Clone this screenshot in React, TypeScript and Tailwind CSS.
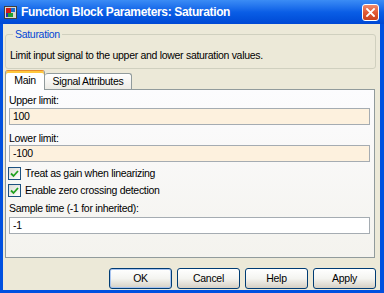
import { useState } from "react";

const font = { fontFamily: '"Liberation Sans", Arial, sans-serif' };

function TitleIcon() {
  return (
    <svg width="13" height="13" viewBox="0 0 13 13">
      <rect x="0.5" y="0.5" width="12" height="12" fill="#d8d8d0" stroke="#404040" />
      <rect x="2" y="2" width="5" height="5" fill="#d01818" />
      <rect x="7" y="2" width="4" height="4" fill="#1a6ad0" />
      <rect x="4" y="7" width="5" height="4" fill="#20a030" />
      <rect x="2" y="7" width="2" height="4" fill="#2030b0" />
    </svg>
  );
}

function CloseButton() {
  return (
    <div className="flex h-[17px] w-[17px] items-center justify-center rounded-[3px] border border-white bg-gradient-to-b from-[#f08a6c] via-[#e25a35] to-[#c8401c]">
      <svg width="9" height="9" viewBox="0 0 9 9">
        <path d="M1 1 L8 8 M8 1 L1 8" stroke="#fff" strokeWidth="1.8" strokeLinecap="square" />
      </svg>
    </div>
  );
}

function Checkbox({ checked, label }: { checked: boolean; label: string }) {
  return (
    <div className="-ml-px flex h-[13px] items-center gap-[4px]">
      <div className="flex h-[13px] w-[13px] items-center justify-center border border-[#1c5180] bg-gradient-to-br from-[#dcdcd6] to-[#ffffff]">
        {checked && (
          <svg width="9" height="9" viewBox="0 0 9 9">
            <path d="M1 4.5 L3.5 7 L8 2" fill="none" stroke="#21a121" strokeWidth="1.8" />
          </svg>
        )}
      </div>
      <span className="text-[10.5px] leading-[13px] tracking-[-0.3px] text-black">{label}</span>
    </div>
  );
}

function Field({ value, tint }: { value: string; tint: boolean }) {
  return (
    <div
      className={
        "flex h-[17px] items-center border border-[#a5acb2] px-[3px] text-[10.5px] tracking-[-0.3px] text-black " +
        (tint ? "bg-[#fdf1de]" : "bg-white")
      }
    >
      {value}
    </div>
  );
}

function Button({ label, isDefault }: { label: string; isDefault?: boolean }) {
  return (
    <div
      className={
        "flex h-[21px] w-[63px] items-center justify-center rounded-[3px] border border-[#003c74] bg-gradient-to-b from-[#ffffff] via-[#f4f4f0] to-[#d6d0c5] text-[10.5px] tracking-[-0.3px] text-black " +
        (isDefault ? "shadow-[inset_0_0_0_1px_#a8c4f0]" : "")
      }
    >
      {label}
    </div>
  );
}

export default function App() {
  const [tab] = useState("Main");
  const text = "text-[10.5px] leading-[13px] tracking-[-0.3px] text-black";

  return (
    <div style={font} className="flex h-[293px] w-[384px] flex-col bg-[#0050e0]">
      <div className="flex h-[24px] items-center bg-gradient-to-b from-[#3b8cf5] via-[#0a5ee6] to-[#0048d4] pl-[4px] pr-[5px]">
        <TitleIcon />
        <span className="ml-[4px] text-[12px] font-bold tracking-[-0.35px] text-white">
          Function Block Parameters: Saturation
        </span>
        <div className="ml-auto">
          <CloseButton />
        </div>
      </div>

      <div className="ml-[3px] mr-[4px] mb-[3px] flex flex-1 flex-col bg-[#ece9d8]">
        <fieldset className="ml-[2px] mr-[4px] mt-[4px] rounded-[3px] border border-[#d0d0bf] px-[4px] pb-[6px] pt-[8px]">
          <legend className="ml-[3px] px-[2px] text-[10.5px] leading-[13px] tracking-[-0.3px] text-[#0046d5]">
            Saturation
          </legend>
          <div className={text}>Limit input signal to the upper and lower saturation values.</div>
        </fieldset>

        <div className="ml-[2px] mt-[1px] flex items-end">
          <div className="relative z-10 -mb-px flex h-[20px] w-[40px] items-center justify-center rounded-t-[3px] border border-b-0 border-[#919b9c] border-t-[#e68b2c] bg-white text-[10.5px] tracking-[-0.3px] text-black shadow-[inset_0_2px_0_#ffc83c]">
            {tab}
          </div>
          <div className="flex h-[16px] w-[87px] items-center justify-center rounded-t-[3px] border border-l-0 border-b-0 border-[#919b9c] bg-gradient-to-b from-[#ffffff] to-[#ecebe5] text-[10.5px] tracking-[-0.3px] text-black">
            Signal Attributes
          </div>
        </div>

        <div className="ml-[2px] mr-[5px] flex h-[169px] flex-col border border-[#919b9c] bg-gradient-to-b from-[#fcfcfe] to-[#f4f3ee] pl-[3px] pr-[4px] pt-[4px]">
          <div className={"h-[13px] " + text}>Upper limit:</div>
          <div className="mt-[1px]">
            <Field value="100" tint />
          </div>
          <div className={"mt-[7px] h-[13px] " + text}>Lower limit:</div>
          <Field value="-100" tint />
          <div className="mt-[5px]">
            <Checkbox checked label="Treat as gain when linearizing" />
          </div>
          <div className="mt-[4px]">
            <Checkbox checked label="Enable zero crossing detection" />
          </div>
          <div className={"mt-[5px] h-[13px] " + text}>Sample time (-1 for inherited):</div>
          <div className="mt-[2px]">
            <Field value="-1" tint={false} />
          </div>
        </div>

        <div className="mt-[10px] flex justify-end gap-[5px] pr-[4px]">
          <Button label="OK" isDefault />
          <Button label="Cancel" />
          <Button label="Help" />
          <Button label="Apply" />
        </div>
      </div>
    </div>
  );
}
